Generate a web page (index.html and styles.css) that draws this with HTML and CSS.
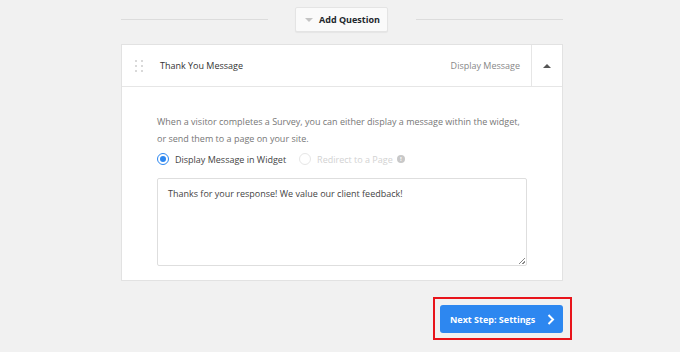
FILE: index.html
```html
<!DOCTYPE html>
<html>
<head>
<meta charset="utf-8">
<link rel="stylesheet" href="styles.css">
</head>
<body>
<div class="page">
  <div class="add-row">
    <span class="rule"></span>
    <button class="add-btn"><span class="tri-down"></span>Add Question</button>
    <span class="rule"></span>
  </div>

  <div class="panel">
    <div class="panel-head">
      <div class="head-main">
        <span class="grip"><i></i><i></i><i></i><i></i><i></i><i></i></span>
        <span class="title">Thank You Message</span>
        <span class="type">Display Message</span>
      </div>
      <div class="head-toggle"><span class="tri-up"></span></div>
    </div>
    <div class="panel-body">
      <p class="desc">When a visitor completes a Survey, you can either display a message within the widget, or send them to a page on your site.</p>
      <div class="radios">
        <label class="radio"><span class="dot on"></span>Display Message in Widget</label>
        <label class="radio disabled"><span class="dot"></span>Redirect to a Page<span class="info">!</span></label>
      </div>
      <div class="textarea">Thanks for your response! We value our client feedback!<span class="grab"></span></div>
    </div>
  </div>

  <div class="foot">
    <div class="highlight">
      <button class="next">Next Step: Settings<svg width="8" height="11" viewBox="0 0 8 11"><path d="M1.5 1 L6 5.5 L1.5 10" fill="none" stroke="#fff" stroke-width="2"/></svg></button>
    </div>
  </div>
</div>
</body>
</html>
```

FILE: styles.css
```css
* { box-sizing: border-box; }
html, body { margin: 0; padding: 0; }
body {
  background: #f1f1f1;
  font-family: "Open Sans", "Noto Sans", sans-serif;
  width: 680px;
  height: 352px;
  overflow: hidden;
}
.page {
  padding-left: 121px;
  width: 563px;
}
.add-row {
  display: flex;
  align-items: center;
  height: 25px;
  margin-top: 7px;
}
.rule {
  flex: 1;
  height: 1px;
  background: #dcdcdc;
}
.add-btn {
  display: flex;
  align-items: center;
  flex: none;
  width: 93px;
  height: 25px;
  margin: 0 28px 0 27px;
  padding: 0 0 0 9px;
  border: 1px solid #e4e4e4;
  border-radius: 2px;
  background: #fafafa;
  box-shadow: 0 1px 1px rgba(0,0,0,0.05);
  font: 700 9px "Open Sans", sans-serif;
  color: #23282d;
  white-space: nowrap;
}
.tri-down {
  width: 0; height: 0;
  border-left: 4px solid transparent;
  border-right: 4px solid transparent;
  border-top: 4px solid #c4c4c4;
  margin-right: 6px;
}
.panel {
  margin-top: 12px;
  background: #fff;
  border: 1px solid #e2e2e2;
}
.panel-head {
  display: flex;
  height: 42px;
  border-bottom: 1px solid #e6e6e6;
}
.head-main {
  flex: 1;
  display: flex;
  align-items: center;
  padding-left: 13px;
  padding-right: 11px;
  font-size: 9px;
}
.grip {
  display: grid;
  grid-template-columns: 2px 2px;
  grid-auto-rows: 2px;
  column-gap: 4px;
  row-gap: 3px;
  margin-right: 17px;
}
.grip i { background: #d9d9d9; display: block; }
.title { color: #333; flex: 1; }
.type { color: #888; }
.head-toggle {
  width: 31px;
  border-left: 1px solid #e6e6e6;
  display: flex;
  align-items: center;
  justify-content: center;
}
.tri-up {
  width: 0; height: 0;
  border-left: 4px solid transparent;
  border-right: 4px solid transparent;
  border-bottom: 4px solid #555;
}
.panel-body {
  padding: 26px 35px 14px 35px;
}
.desc {
  margin: 0;
  font-size: 9px;
  line-height: 17px;
  color: #777;
}
.radios {
  display: flex;
  align-items: center;
  margin-top: 4px;
  height: 16px;
  font-size: 9px;
}
.radio {
  display: flex;
  align-items: center;
  color: #444;
  margin-right: 13px;
}
.radio.disabled { color: #d2d2d2; margin-right: 0; }
.dot {
  width: 12px; height: 12px;
  border-radius: 50%;
  border: 1px solid #e6e6e6;
  margin-right: 6px;
  position: relative;
}
.dot.on {
  border: 1.5px solid #2d87f0;
}
.dot.on::after {
  content: "";
  position: absolute;
  left: 1.5px; top: 1.5px;
  width: 6px; height: 6px;
  border-radius: 50%;
  background: #2d87f0;
}
.info {
  display: inline-flex;
  align-items: center;
  justify-content: center;
  width: 8px; height: 8px;
  border-radius: 50%;
  background: #c8c8c8;
  color: #fff;
  font-size: 6px;
  font-weight: 700;
  margin-left: 4px;
}
.textarea {
  position: relative;
  margin-top: 11px;
  height: 88px;
  border: 1px solid #dedede;
  border-radius: 2px;
  padding: 8px 10px;
  font-size: 9px;
  color: #444;
}
.grab {
  position: absolute;
  right: 1px; bottom: 1px;
  width: 6px; height: 6px;
  background: linear-gradient(135deg, transparent 45%, #888 45%, #888 55%, transparent 55%, transparent 75%, #888 75%, #888 85%, transparent 85%);
}
.foot {
  display: flex;
  justify-content: flex-end;
  margin-top: 16px;
  margin-right: -9px;
}
.highlight {
  border: 2px solid #e8141b;
  padding: 6px 7px 5px 5px;
}
.next {
  display: flex;
  align-items: center;
  width: 123px;
  height: 28px;
  padding: 0 0 0 10px;
  border: 0;
  border-radius: 3px;
  background: #2d87f0;
  color: #fff;
  font: 700 9px "Open Sans", sans-serif;
  white-space: nowrap;
}
.next svg { margin-left: 12px; }
```
